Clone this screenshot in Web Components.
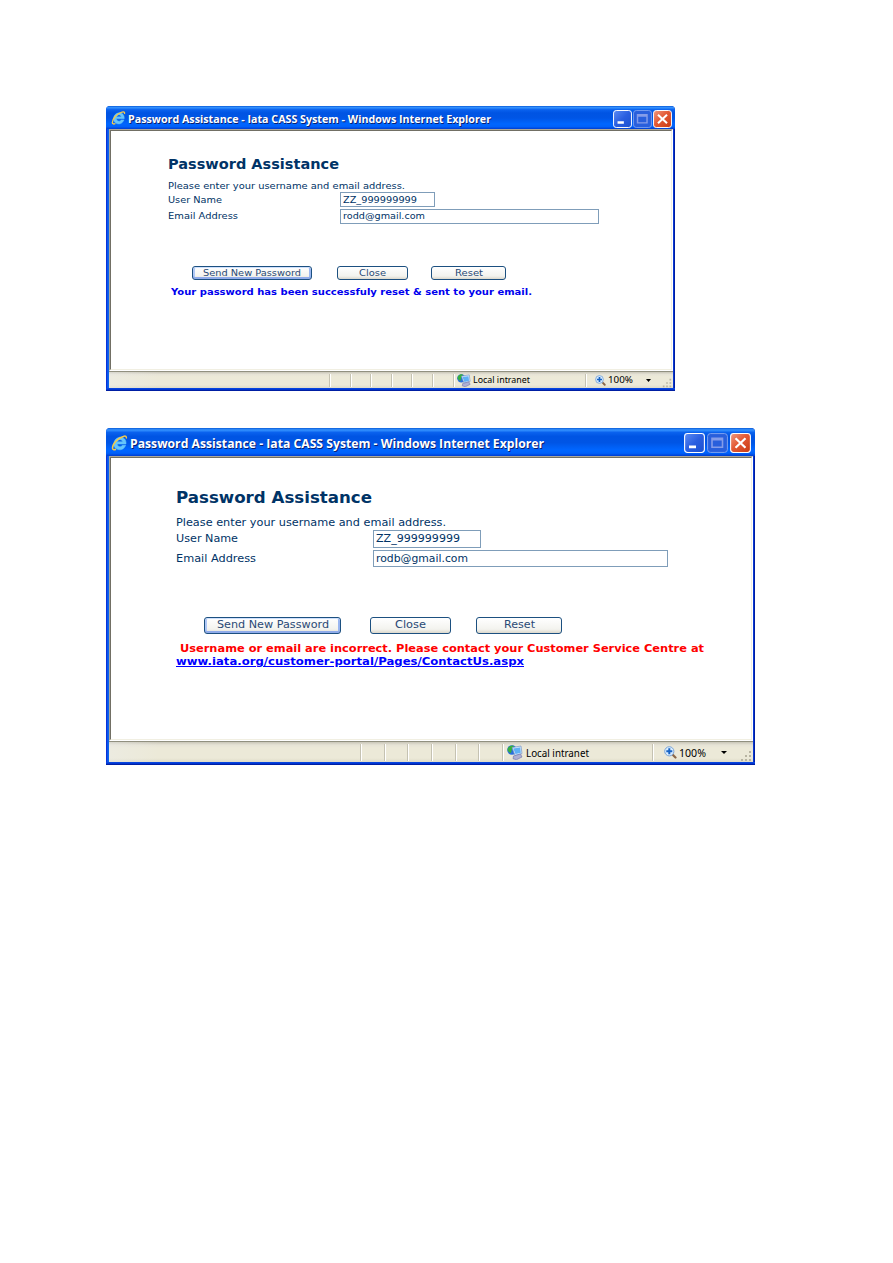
<!DOCTYPE html>
<html lang="en"><head><meta charset="utf-8"><title>Password Assistance</title>
<style>
body{margin:0;background:#fff;width:893px;height:1263px;overflow:hidden;font-family:"DejaVu Sans",sans-serif;color:#003366}
main{display:flex;flex-direction:column;align-items:flex-start;gap:37px;padding:106px 0 0 106px}
.link{text-decoration:underline;color:#00f}
</style></head><body>
<main>
<xp-window style="--w:569px;--h:285px;--th:23px;--sh:16px;--fh:239px;--bs:19px;--bh:18px;--bg:1px;--tp:2px;--br:3px" tw="363" tf="11.2" ix="14" sp="221,21,20,21,20,21,21" lw="57" sf="9" zx="55" zw="25" pw="10" gi="3" ig="2" mg="9">
  <form-row top="25" left="57" h="17"><fit-text w="171" f="13.3" bold>Password Assistance</fit-text></form-row>
  <form-row top="7" left="57" h="12"><fit-text w="237" f="9.4">Please enter your username and email address.</fit-text></form-row>
  <form-row left="57" h="15"><field-label style="--lw:172px"><fit-text w="54" f="9.4">User Name</fit-text></field-label><text-field style="--fw:95px"><fit-text w="74" f="9.4">ZZ_999999999</fit-text></text-field></form-row>
  <form-row top="2" left="57" h="15" style="--nb:2px"><field-label style="--lw:172px"><fit-text w="70" f="9.4">Email Address</fit-text></field-label><text-field style="--fw:259px"><fit-text w="82" f="9.4">rodd@gmail.com</fit-text></text-field></form-row>
  <form-row top="42" left="81" h="14"><xp-button focus style="--bw:120px"><fit-text w="98" f="9.4">Send New Password</fit-text></xp-button><xp-button style="--bw:71px;margin-left:25px"><fit-text w="27" f="9.4">Close</fit-text></xp-button><xp-button style="--bw:75px;margin-left:23px"><fit-text w="28" f="9.4">Reset</fit-text></xp-button></form-row>
  <form-row top="6" left="60" h="12" style="color:#0000ee"><fit-text w="361" f="9" bold>Your password has been successfuly reset &amp; sent to your email.</fit-text></form-row>
</xp-window>
<xp-window style="--w:649px;--h:337px;--th:28px;--sh:20px;--fh:282px;--bs:21px;--bh:20px;--bg:2px;--tp:2px;--br:4px" tw="414" tf="13" ix="16" sp="252,24,23,24,24,23,24" lw="63" sf="11" zx="63" zw="27" pw="12" gi="4" ig="3" mg="11">
  <form-row top="30" left="65" h="18" style="--nt:2px"><fit-text w="196" f="16" bold>Password Assistance</fit-text></form-row>
  <form-row top="10" left="65" h="13" style="--nt:2px"><fit-text w="270" f="10.8">Please enter your username and email address.</fit-text></form-row>
  <form-row top="1" left="65" h="18"><field-label style="--lw:197px"><fit-text w="62" f="10.8">User Name</fit-text></field-label><text-field style="--fw:108px"><fit-text w="84" f="10.8">ZZ_999999999</fit-text></text-field></form-row>
  <form-row top="2" left="65" h="17" style="--nt:2px"><field-label style="--lw:197px"><fit-text w="80" f="10.8">Email Address</fit-text></field-label><text-field style="--fw:295px"><fit-text w="92" f="10.8">rodb@gmail.com</fit-text></text-field></form-row>
  <form-row top="50" left="93" h="17"><xp-button focus style="--bw:137px"><fit-text w="112" f="10.8">Send New Password</fit-text></xp-button><xp-button style="--bw:81px;margin-left:29px"><fit-text w="31" f="10.8">Close</fit-text></xp-button><xp-button style="--bw:86px;margin-left:25px"><fit-text w="31" f="10.8">Reset</fit-text></xp-button></form-row>
  <form-row top="8" left="69" h="12" style="color:#f00;--nt:2px"><fit-text w="524" f="10.8" bold>Username or email are incorrect. Please contact your Customer Service Centre at</fit-text></form-row>
  <form-row top="1" left="65" h="13" style="--nt:2px"><fit-text class="link" w="348" f="10.8" bold>www.iata.org/customer-portal/Pages/ContactUs.aspx</fit-text></form-row>
</xp-window>
</main>
<script>
// Text scaled horizontally so that it fills a given width.
class FitText extends HTMLElement{
  connectedCallback(){
    const w=+this.getAttribute('w'),f=this.getAttribute('f');
    this.attachShadow({mode:'open'}).innerHTML=`<style>:host{display:block;flex:none;width:${w}px;padding:var(--nt,0) 0 var(--nb,0);white-space:nowrap;font-size:${f}px;line-height:1.2;font-weight:${this.hasAttribute('bold')?'bold':'normal'}}
    span{display:inline-block;transform-origin:0 50%;vertical-align:top;text-decoration:inherit}</style><span><slot></slot></span>`;
    this.fit();
  }
  fit(){
    const s=this.shadowRoot.querySelector('span');
    s.style.transform='none';
    const n=s.getBoundingClientRect().width;
    if(n)s.style.transform=`scaleX(${this.getAttribute('w')/n})`;
  }
}
class FormRow extends HTMLElement{
  connectedCallback(){
    const a=n=>this.getAttribute(n)||0;
    this.attachShadow({mode:'open'}).innerHTML=`<style>:host{display:flex;align-items:center;height:${a('h')}px;margin:${a('top')}px 0 0 ${a('left')}px}</style><slot></slot>`;
  }
}
class FieldLabel extends HTMLElement{
  constructor(){super();this.attachShadow({mode:'open'}).innerHTML=`<style>:host{display:block;flex:none;width:var(--lw)}</style><slot></slot>`}
}
class TextField extends HTMLElement{
  constructor(){super();this.attachShadow({mode:'open'}).innerHTML=`<style>:host{display:flex;align-items:center;box-sizing:border-box;flex:none;width:var(--fw);height:100%;padding-left:2px;border:1px solid #7f9db9;background:#fff}</style><slot></slot>`}
}
class XpButton extends HTMLElement{
  constructor(){super();this.attachShadow({mode:'open'}).innerHTML=`<style>:host{display:flex;align-items:center;justify-content:center;box-sizing:border-box;flex:none;width:var(--bw);height:100%;border:1px solid #1c5080;border-radius:3px;background:linear-gradient(#fff,#f3f3ee 75%,#dcd8cc);color:#2a4a75}
  :host([focus]){box-shadow:inset 0 1px #cee0fd,inset 0 -2px #8fabea,inset 2px 0 #b0c8f6,inset -2px 0 #9ab6f0}</style><slot></slot>`}
}
class XpWindow extends HTMLElement{
  connectedCallback(){
    const a=n=>this.getAttribute(n);
    const ix=+a('ix'),pw=+a('pw'),sf=a('sf');
    const seps=a('sp').split(',').map(v=>`<i class="sep" style="margin-left:${v-1}px"></i>`).join('');
    this.attachShadow({mode:'open'}).innerHTML=`<style>
    :host{display:flex;flex-direction:column;box-sizing:border-box;width:var(--w);height:var(--h);border-radius:4px 4px 0 0;background:linear-gradient(90deg,#0831d9 0 1px,#0a55ea 1px 2px,#0b63ee 2px 3px,#0b45dc 3px calc(100% - 2px),#0838d4 calc(100% - 2px) calc(100% - 1px),#001ea0 calc(100% - 1px));overflow:hidden}
    .title{display:flex;align-items:center;flex:none;height:var(--th);padding:0 var(--br) 0 4px;box-sizing:border-box;background:linear-gradient(#0a5bd8,#3593ff 7%,#0a62ee 16%,#0054e3 30%,#0055e5 52%,#0066ff 78%,#0061fa 90%,#003dd0);color:#fff;text-shadow:1px 1px #0a1f70;font-family:"Open Sans",sans-serif}
    .cap{margin-left:2px;--nt:3px}
    .ctl{display:flex;gap:var(--bg);margin-left:auto;padding-top:var(--tp)}
    .b{width:var(--bs);height:var(--bh)}
    .page{flex:none;box-sizing:border-box;height:calc(var(--fh) + 3px);margin:0 2px 0 3px;border-style:solid;border-width:1px;border-color:#aca899 #fff #fff #aca899;background:#fff}
    .in{box-sizing:border-box;height:100%;border-style:solid;border-width:1px;border-color:#716f64 #f1efe2 #f1efe2 #716f64;display:flow-root}
    .status{display:flex;align-items:center;flex:none;box-sizing:border-box;height:calc(var(--sh) + 1px);margin:0 2px 0 3px;padding-top:1px;border-top:1px solid #919080;background:linear-gradient(90deg,#eceeed66,#ece9d800 50px),linear-gradient(#c9c6b8,#e6e3d6 15%,#ece9d8 30%,#ece9d8 80%,#dedbc9);color:#000;font-family:"Noto Sans",sans-serif}
    .sep{flex:none;width:1px;height:86%;background:#c5c2b2;border-right:1px solid #fff;margin-right:-1px}
    .bottom{flex:1;background:linear-gradient(#0a4be5,#0036d0 50%,#00138c)}
    svg{flex:none;display:block}
    </style>
    <div class="title">
      <svg style="margin-left:1px" width="${ix+1}" height="${ix+1}" viewBox="0 0 17 17"><path d="M15 10H6.2c.2 3 4.2 3.5 5.2 1.3h3.3C12.8 16 8.8 16.5 5.8 15 .9 12.8 2.1 4 8.7 3.2 13 2.8 15.5 6 15 10ZM6.3 7.7h5.3C11.3 5 6.8 5 6.3 7.7Z" fill="#65c5fb" stroke="#65c5fb" stroke-width=".5"/><path d="M15.3 4.5c.5-2-.7-3-3-2C7 4 1.3 10 1.5 14.3c.2 2 2 1.7 3.5 1" fill="none" stroke="#f3c94b" stroke-width="1.5"/></svg>
      <fit-text class="cap" w="${a('tw')}" f="${a('tf')}" bold>Password Assistance - Iata CASS System - Windows Internet Explorer</fit-text>
      <div class="ctl">
        <svg class="b" viewBox="0 0 21 21" preserveAspectRatio="none"><defs><linearGradient id="u" x2="1" y2="1"><stop stop-color="#5c8cf4"/><stop offset=".5" stop-color="#2a5ee0"/><stop offset="1" stop-color="#1b50cf"/></linearGradient></defs><rect x=".6" y=".6" width="19.8" height="19.8" rx="3" fill="url(#u)" stroke="#fff" stroke-width="1.1"/><path d="M5 13h7v3H5z" fill="#fff"/></svg>
        <svg class="b" viewBox="0 0 21 21" preserveAspectRatio="none"><rect x=".6" y=".6" width="19.8" height="19.8" rx="3" fill="#295fdc" stroke="#7da2f0" stroke-width="1"/><path d="M5 5.5h10.5v9.5H5zM5 7h10.5" fill="none" stroke="#849ce9" stroke-width="1.6"/></svg>
        <svg class="b" viewBox="0 0 21 21" preserveAspectRatio="none"><defs><linearGradient id="r" x2="1" y2="1"><stop stop-color="#f09a80"/><stop offset=".45" stop-color="#e35a36"/><stop offset="1" stop-color="#c83a12"/></linearGradient></defs><rect x=".6" y=".6" width="19.8" height="19.8" rx="3" fill="url(#r)" stroke="#fff" stroke-width="1.1"/><path d="m5.5 5.5 10 10m0-10-10 10" stroke="#fff" stroke-width="2.2"/></svg>
      </div>
    </div>
    <div class="page"><div class="in"><slot></slot></div></div>
    <div class="status">${seps}
      <svg style="margin-left:${a('gi')}px" width="${ix}" height="${ix-1}" viewBox="0 0 16 15" preserveAspectRatio="none"><circle cx="5" cy="5" r="4.8" fill="#2a6fdc"/><path d="M1 3c2-3 5-3 6-2L5 4 4 8C1 7 0 5 1 3Z" fill="#36b03c"/><path d="m5 2.5 9-1.5 1 7.5-7 2Z" fill="#d4e8fc" stroke="#7793c4" stroke-width=".7"/><path d="m6.3 3.6 6.8-1.1.7 5.2-5.3 1.4Z" fill="#5fb0f5"/><path d="m6.5 11 7-2 1.5 3-5.5 2.7-3.5-1Z" fill="#aeb0d4" stroke="#6b6fa8" stroke-width=".6"/></svg>
      <fit-text style="margin-left:${a('ig')}px" w="${a('lw')}" f="${sf}">Local intranet</fit-text>
      <i class="sep" style="margin-left:${a('zx')}px"></i>
      <svg style="margin-left:${a('mg')}px" width="${pw+1}" height="${pw+1}" viewBox="0 0 13 13"><path d="m8.5 8.5 3 3" stroke="#8b6748" stroke-width="2.2" stroke-linecap="round"/><circle cx="5.3" cy="5.3" r="4.6" fill="#d9edff" stroke="#7aa3d6" stroke-width="1"/><path d="M5.3 2.3v6m-3-3h6" stroke="#1763c5" stroke-width="2"/></svg>
      <fit-text style="margin-left:2px" w="${a('zw')}" f="${sf}">100%</fit-text>
      <svg style="margin-left:${pw+3}px" width="${pw/2}" height="3" viewBox="0 0 6 3" preserveAspectRatio="none"><path d="M0 0h6L3 3Z" fill="#000"/></svg>
      <svg style="margin-left:auto;align-self:flex-end;margin-right:1px" width="${pw}" height="${pw}" viewBox="0 0 12 12"><path d="M9 1h2v2H9zM5 5h2v2H5zM9 5h2v2H9zM1 9h2v2H1zM5 9h2v2H5zM9 9h2v2H9z" fill="#b8b4a2"/></svg>
    </div>
    <div class="bottom"></div>`;
  }
}
customElements.define('fit-text',FitText);
customElements.define('field-label',FieldLabel);
customElements.define('text-field',TextField);
customElements.define('xp-button',XpButton);
customElements.define('form-row',FormRow);
customElements.define('xp-window',XpWindow);
// Texts are measured again once the slots of the windows are in place.
document.querySelectorAll('fit-text').forEach(t=>t.fit());
</script>
</body></html>
